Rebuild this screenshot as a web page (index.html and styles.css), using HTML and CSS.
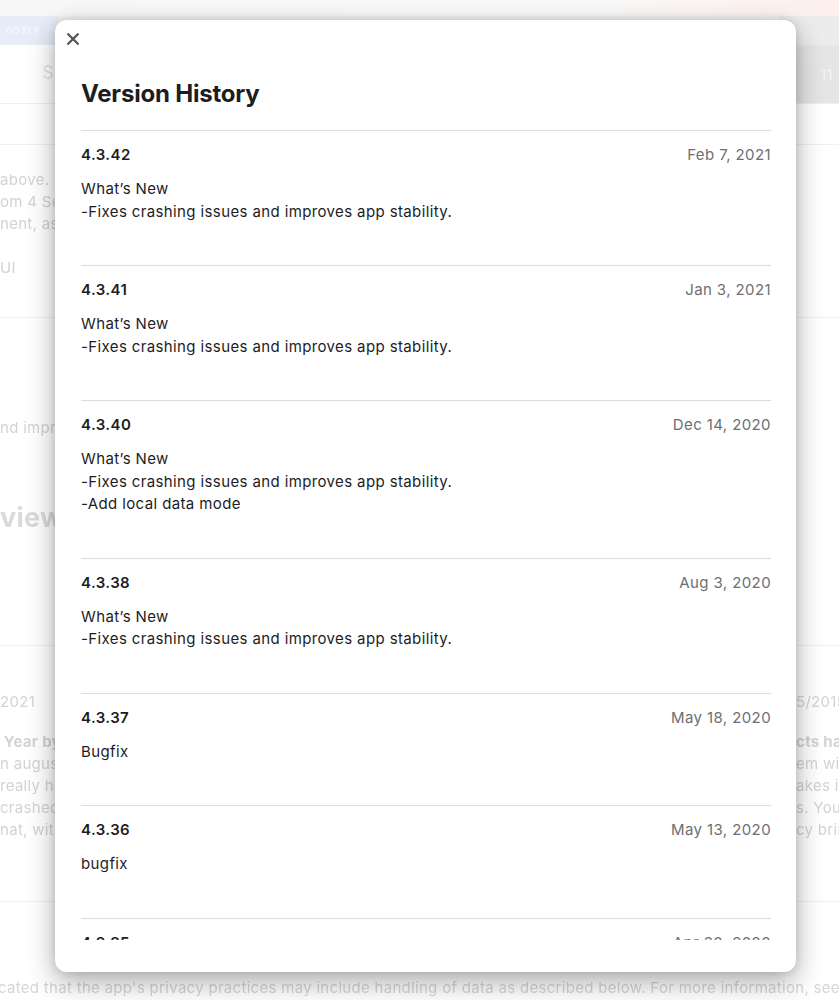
FILE: index.html
```html
<!DOCTYPE html>
<html lang="en">
<head>
<meta charset="utf-8">
<title>Version History</title>
<link rel="stylesheet" href="styles.css">
</head>
<body>
<div class="page">
  <div class="topbar"></div>
  <div class="nav"><span class="pill">GO FLY</span><span class="nav-mid"></span><span class="nav-right"></span></div>
  <div class="sub"><span class="sub-left">S</span><span class="sub-mid"></span><span class="sub-right">11</span></div>
  <div class="blank"></div>
  <div class="bg-row r-desc">
    <div class="bg-left">
      <div>above. Lorem ipsum</div>
      <div>om 4 Sep</div>
      <div>nent, as</div>
      <div class="gap">UI</div>
    </div>
    <div class="bg-right"></div>
  </div>
  <div class="bg-row r-news">
    <div class="bg-left">
      <div>nd improves</div>
      <div class="bg-heading">views</div>
    </div>
    <div class="bg-right"></div>
  </div>
  <div class="bg-row r-reviews">
    <div class="bg-left">
      <div>2021</div>
      <div class="b">&nbsp;Year by</div>
      <div>n august</div>
      <div>really has</div>
      <div>crashed</div>
      <div>nat, with</div>
    </div>
    <div class="bg-right">
      <div>5/2015</div>
      <div class="b">cts has</div>
      <div>em will</div>
      <div>akes it</div>
      <div>s. You</div>
      <div>cy bring</div>
    </div>
  </div>
  <div class="bg-foot">cated that the app's privacy practices may include handling of data as described below. For more information, see the developer's privacy policy.</div>
</div>

<div class="modal" role="dialog" aria-label="Version History">
  <div class="modal-top">
    <button class="close" aria-label="Close">
      <svg width="12" height="12" viewBox="0 0 12 12"><path d="M1.2 1.2L10.8 10.8M10.8 1.2L1.2 10.8" stroke="#555" stroke-width="2.3" stroke-linecap="round"/></svg>
    </button>
  </div>
  <h1 class="title">Version History</h1>
  <div class="list">
    <section class="entry">
      <div class="entry-head"><span class="ver">4.3.42</span><span class="date">Feb 7, 2021</span></div>
      <div class="notes">What’s New<br>-Fixes crashing issues and improves app stability.</div>
    </section>
    <section class="entry">
      <div class="entry-head"><span class="ver">4.3.41</span><span class="date">Jan 3, 2021</span></div>
      <div class="notes">What’s New<br>-Fixes crashing issues and improves app stability.</div>
    </section>
    <section class="entry">
      <div class="entry-head"><span class="ver">4.3.40</span><span class="date">Dec 14, 2020</span></div>
      <div class="notes">What’s New<br>-Fixes crashing issues and improves app stability.<br>-Add local data mode</div>
    </section>
    <section class="entry">
      <div class="entry-head"><span class="ver">4.3.38</span><span class="date">Aug 3, 2020</span></div>
      <div class="notes">What’s New<br>-Fixes crashing issues and improves app stability.</div>
    </section>
    <section class="entry">
      <div class="entry-head"><span class="ver">4.3.37</span><span class="date">May 18, 2020</span></div>
      <div class="notes">Bugfix</div>
    </section>
    <section class="entry">
      <div class="entry-head"><span class="ver">4.3.36</span><span class="date">May 13, 2020</span></div>
      <div class="notes">bugfix</div>
    </section>
    <section class="entry">
      <div class="entry-head"><span class="ver">4.3.35</span><span class="date">Apr 30, 2020</span></div>
      <div class="notes">bugfix</div>
    </section>
  </div>
</div>
</body>
</html>
```
FILE: styles.css
```css
* { box-sizing: border-box; }
html, body { margin: 0; padding: 0; }
body {
  width: 839px;
  height: 1000px;
  overflow: hidden;
  background: #fff;
  font-family: Inter, "Noto Sans", "Liberation Sans", sans-serif;
  color: #1d1d1f;
}

/* ---------- faded background page ---------- */
.page {
  width: 839px;
  height: 1000px;
  overflow: hidden;
  color: #d3d3d3;
  font-size: 15px;
  line-height: 22px;
  letter-spacing: 0.3px;
  filter: blur(0.7px);
}
.topbar {
  height: 16px;
  background: linear-gradient(90deg, #f7f7f8 0%, #f9f9f9 70%, #fdf0ec 100%);
}
.nav {
  height: 29px;
  display: flex;
}
.pill {
  width: 58px;
  background: #e6edf8;
  color: #f4f7fc;
  font-size: 9px;
  font-weight: 700;
  line-height: 29px;
  padding-left: 6px;
}
.nav-mid { flex: 1; background: #f3f3f4; }
.nav-right { width: 60px; background: #ececec; }
.sub {
  height: 59px;
  display: flex;
  border-bottom: 1px solid #f0f0f0;
}
.sub-left {
  width: 60px;
  color: #e4e4e4;
  text-align: right;
  line-height: 56px;
  padding-right: 6px;
  font-size: 18px;
}
.sub-mid { flex: 1; background: #fafafa; }
.sub-right {
  width: 70px;
  background: #e5e5e5;
  color: #f2f2f2;
  text-align: right;
  padding-right: 6px;
  line-height: 60px;
}
.blank { height: 41px; border-bottom: 1px solid #f1f1f1; }
.bg-row {
  display: flex;
  justify-content: space-between;
  border-bottom: 1px solid #f1f1f1;
}
.bg-left {
  width: 60px;
  white-space: nowrap;
  overflow: hidden;
}
.bg-right {
  width: 43px;
  white-space: nowrap;
  overflow: hidden;
}
.r-desc { padding: 24px 0 38px; }
.r-desc .gap { margin-top: 22px; }
.r-news { padding: 99px 0 110px; }
.bg-heading {
  font-size: 27px;
  font-weight: 700;
  line-height: 34px;
  margin-top: 62px;
  color: #dadada;
}
.r-reviews { padding: 45px 0 60px; }
.r-reviews .b { margin-top: 18px; font-weight: 700; }
.bg-foot {
  white-space: nowrap;
  padding-top: 75px;
  margin-left: -2px;
  color: #d6d6d6;
}

/* ---------- modal ---------- */
.modal {
  position: absolute;
  left: 55px;
  top: 20px;
  width: 741px;
  height: 952px;
  background: #fff;
  border-radius: 12px;
  box-shadow: 0 10px 28px rgba(0,0,0,0.32), 0 0 10px rgba(0,0,0,0.12);
  display: flex;
  flex-direction: column;
}
.modal-top {
  padding: 13px 0 0 12px;
  height: 25px;
}
.close {
  display: block;
  border: 0;
  padding: 0;
  background: none;
  width: 12px;
  height: 12px;
}
.close svg { display: block; }
.title {
  margin: 34px 0 21px 26px;
  font-size: 24px;
  line-height: 30px;
  font-weight: 700;
  letter-spacing: -0.2px;
  color: #1d1d1f;
}
.list {
  margin: 0 25px 0 26px;
  height: 810px;
  overflow: hidden;
}
.entry {
  border-top: 1px solid #dcdcdf;
  padding: 13px 0 42px;
}
.entry-head {
  display: flex;
  justify-content: space-between;
  align-items: baseline;
  font-size: 15px;
  line-height: 22px;
  letter-spacing: 0.4px;
}
.ver { font-weight: 600; color: #1d1d1f; }
.date { color: #6e6e73; }
.notes {
  margin-top: 12px;
  font-size: 15px;
  line-height: 22.5px;
  letter-spacing: 0.38px;
  color: #1d1d1f;
}
```
